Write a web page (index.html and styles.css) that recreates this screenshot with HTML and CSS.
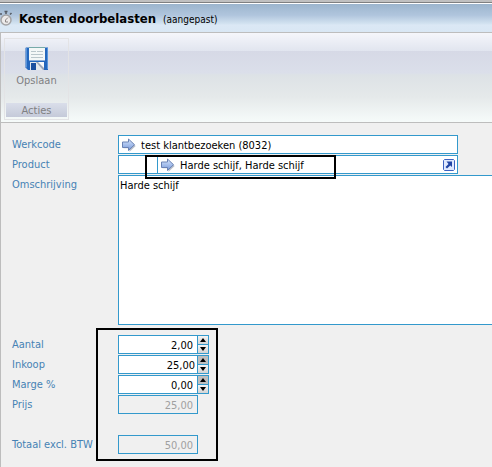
FILE: index.html
```html
<!DOCTYPE html>
<html lang="nl">
<head>
<meta charset="utf-8">
<title>Kosten doorbelasten</title>
<link rel="stylesheet" href="styles.css">
</head>
<body>
<svg class="defs" aria-hidden="true">
  <defs>
    <linearGradient id="arrow-fill" x1="0" y1="0" x2="0" y2="1">
      <stop offset="0" stop-color="#d9e8ff"/>
      <stop offset="1" stop-color="#7496d8"/>
    </linearGradient>
    <symbol id="arrow" viewBox="0 0 14 14">
      <path d="M1 5h6V1.500l6.200 5.700L7 13V9.500H1z" fill="#8a94a8" opacity=".6" transform="translate(.5 .8)"/>
      <path d="M.5 4h6V1l6 5.700-6 5.800V9.500h-6z" fill="url(#arrow-fill)" stroke="#6a82b4"/>
    </symbol>
  </defs>
</svg>
<div class="frame"></div>
<header class="titlebar">
  <svg class="clock" viewBox="0 0 14 18" aria-hidden="true">
    <path d="M0 5h2M4.500 2.500h3M6 3v2M10 5.500l1.500-1.500" stroke="#555b64" stroke-width="1.500"/>
    <circle cx="6" cy="11" r="5" fill="#eceaea" stroke="#a3a3a5" stroke-width="1.500"/>
    <path d="M8 8.500L5.500 11v2H8" fill="none" stroke="#8b8585"/>
  </svg>
  <h1>Kosten doorbelasten</h1>
  <span class="state">(aangepast)</span>
</header>
<main class="window">
  <div class="toolbar">
    <section class="group" aria-labelledby="group-name">
      <button type="button" class="save">
        <svg viewBox="0 0 24 24" aria-hidden="true">
          <path d="M1 .5h22v22.500H3L.5 20.500V1z" fill="#2467bd"/>
          <path d="M1.500 1v19.500M22.500 1v21" stroke="#5795dc"/>
          <path d="M4 0h16v13.500H4z" fill="#f3f7f7"/>
          <path d="M4 .5h16" stroke="#76aaa9"/>
          <path d="M6 4.500h5M12 4.500h6M6 7.500h12M6 10.500h12" stroke="#b9c6cb"/>
          <path d="M5 15h14v8H5z" fill="#e4e8ed"/>
          <path d="M6 16h5v7H6z" fill="#1b4f9f"/>
          <path d="M11 15l7 8h1v-8z" fill="#9ba6b8"/>
          <path d="M13 15l6 6v-6z" fill="#f8fafb"/>
        </svg>
        Opslaan
      </button>
      <div class="group-name" id="group-name">Acties</div>
    </section>
  </div>
  <form class="form">
    <label for="werkcode">Werkcode</label>
    <div class="field lookup wide">
      <svg class="arrow" aria-hidden="true"><use href="#arrow"/></svg>
      <input id="werkcode" value="test klantbezoeken (8032)">
    </div>
    <label for="product">Product</label>
    <div class="wide product">
      <input class="field code" aria-label="Productcode">
      <div class="field lookup">
        <svg class="arrow" aria-hidden="true"><use href="#arrow"/></svg>
        <input id="product" value="Harde schijf, Harde schijf">
        <button type="button" class="open" aria-label="Openen">
          <svg viewBox="0 0 12 12" aria-hidden="true">
            <path d="M.5 1.500l1-1h9l1 1v9l-1 1h-9l-1-1z" fill="#dfe9ff" stroke="#3d62c0"/>
            <path d="M3.500 2.500H9V8L7.300 6.600 4 9.600 2.500 8 5.500 4.900z" fill="#2145a5"/>
          </svg>
        </button>
      </div>
      <div class="mark mark-product"></div>
    </div>
    <label for="omschrijving">Omschrijving</label>
    <textarea class="field" id="omschrijving">Harde schijf</textarea>
    <div class="amounts">
      <label for="aantal">Aantal</label>
      <div class="number">
        <input class="field" id="aantal" value="2,00">
        <div class="spin"><button type="button" aria-label="Aantal hoger"></button><button type="button" class="down" aria-label="Aantal lager"></button></div>
      </div>
      <label for="inkoop">Inkoop</label>
      <div class="number">
        <input class="field active" id="inkoop" value="25,00">
        <div class="spin"><button type="button" class="dark" aria-label="Inkoop hoger"></button><button type="button" class="down" aria-label="Inkoop lager"></button></div>
      </div>
      <label for="marge">Marge %</label>
      <div class="number">
        <input class="field" id="marge" value="0,00">
        <div class="spin"><button type="button" class="dark" aria-label="Marge hoger"></button><button type="button" class="down" aria-label="Marge lager"></button></div>
      </div>
      <label for="prijs">Prijs</label>
      <div class="number"><input class="field" id="prijs" value="25,00" disabled></div>
      <label class="total" for="totaal">Totaal excl. BTW</label>
      <div class="number total"><input class="field" id="totaal" value="50,00" disabled></div>
      <div class="mark mark-amounts"></div>
    </div>
  </form>
</main>
</body>
</html>
```
FILE: styles.css
```css
* { box-sizing: border-box; }
html, body { height: 100%; }
body {
  margin: 0;
  display: flex;
  flex-direction: column;
  overflow: hidden;
  background: #f0f0f0;
  color: #000;
  font: 11px/14px Tahoma, "DejaVu Sans Condensed", sans-serif;
}
input, textarea, button { font: inherit; color: inherit; margin: 0; border-radius: 0; }
svg { display: block; flex: none; }
.defs { position: absolute; width: 0; height: 0; }

.frame { flex: none; height: 4px; background: #c0c0c0; border-bottom: 1px solid #fff; box-shadow: inset 0 -1px #808080; }
.titlebar {
  flex: none;
  height: 28px;
  display: flex;
  align-items: center;
  background: linear-gradient(#9cb5cd, #b0c5dd 40%, #d2e2f0 70%, #dbe8f5 75%, #d9e7f4);
}
.clock { width: 14px; height: 18px; }
h1 { margin: 0 0 0 5px; padding-top: 2px; font-size: 13px; line-height: 16px; font-weight: bold; white-space: nowrap; }
.state { margin-left: 7px; padding-top: 4px; font-size: 10px; white-space: nowrap; }

.window { flex: 1; border-top: 1px solid #bdbdbd; border-left: 1px solid #bdbdbd; }
.toolbar {
  padding: 5px 3px 2px;
  border-bottom: 1px solid #bdbdbd;
  background: linear-gradient(#f5f6fb, #e1e5ef 18px, #d6d9e6 18px, #dbdfea 40px, #dde2e6 42px, #e5e9ea 64px, #f6fbfa);
}
.group {
  width: 65px;
  height: 82px;
  padding: 1px;
  border: 1px solid #e3e3e5;
  display: flex;
  flex-direction: column;
  justify-content: space-between;
  color: #808083;
}
.save {
  display: flex;
  flex-direction: column;
  align-items: center;
  gap: 3px;
  padding: 7px 0 0;
  border: 0;
  background: none;
}
.save svg { width: 24px; height: 24px; }
.group-name { height: 14px; margin-bottom: 1px; padding-top: 1px; text-align: center; background: linear-gradient(#dadeea, #c5cad9); }

.form {
  padding: 12px 0 0 11px;
  display: grid;
  grid-template-columns: 106px 1fr;
  row-gap: 1px;
}
label { padding-top: 3px; color: #4682b4; white-space: nowrap; }
.field { height: 19px; border: 1px solid #3399cc; background: #fff; outline: 0; }
.wide { width: 340px; }
.lookup { display: flex; align-items: center; gap: 5px; padding: 0 2px 0 3px; }
.lookup input { flex: 1; min-width: 0; padding: 2px 0 0; border: 0; background: none; outline: 0; }
.arrow { width: 14px; height: 14px; }
.product { position: relative; display: flex; }
.product .lookup { flex: 1; margin-left: -1px; }
.code { width: 40px; }
.open { width: 12px; height: 12px; padding: 0; border: 0; background: none; }
textarea.field { width: 100%; height: 150px; padding: 3px 1px; border-right: 0; resize: none; }

.amounts {
  position: relative;
  grid-column: 1 / -1;
  margin-top: 9px;
  display: grid;
  grid-template-columns: subgrid;
  row-gap: 1px;
}
.number { display: flex; }
.number .field { width: 80px; padding: 2px 4px 0; text-align: right; }
.number .active { padding-right: 2px; }
.field:disabled { color: #a0a0a0; background: #f0f0f0; }
.total { margin-top: 20px; }
.spin {
  width: 12px;
  height: 19px;
  margin-left: -1px;
  display: grid;
  grid-template-rows: 1fr 1fr;
  gap: 1px;
  padding: 1px;
  background: #3399cc;
}
.spin button { display: grid; place-items: center; padding: 0; border: 0; background: linear-gradient(#f4f4f4, #d4d4d4); }
.spin .dark { background: #bebebe; }
.spin button::before { content: ""; border: 3px solid transparent; border-top: 0; border-bottom: 4px solid #000; }
.spin .down::before { border-top: 4px solid #000; border-bottom: 0; }

.mark { position: absolute; border: 2px solid #000; pointer-events: none; }
.mark-product { left: 27px; top: 0; width: 191px; height: 24px; }
.mark-amounts { left: 84px; top: -7px; width: 122px; height: 133px; }
```
